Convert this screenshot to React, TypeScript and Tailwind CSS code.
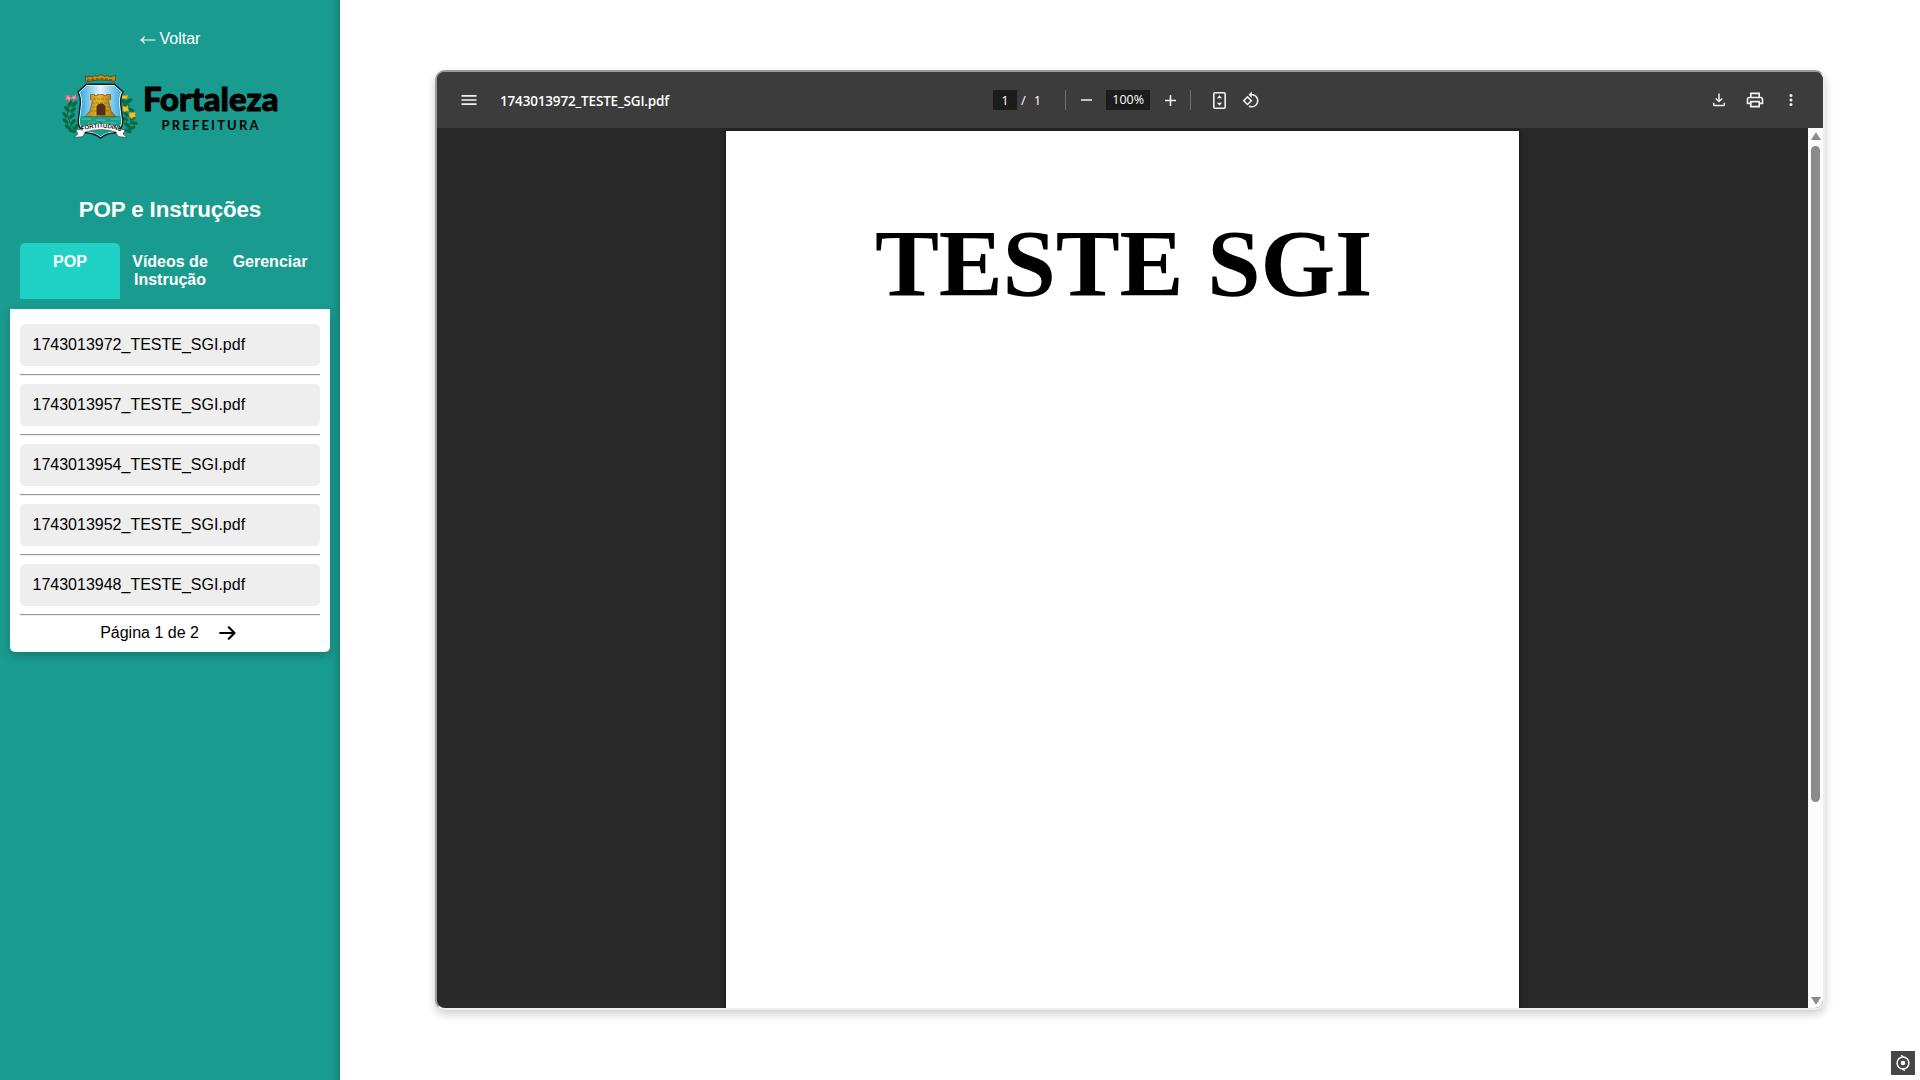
import React from "react";

const files = [
  "1743013972_TESTE_SGI.pdf",
  "1743013957_TESTE_SGI.pdf",
  "1743013954_TESTE_SGI.pdf",
  "1743013952_TESTE_SGI.pdf",
  "1743013948_TESTE_SGI.pdf",
];

function Leaf({ x, y, r, c = "#12663f" }: { x: number; y: number; r: number; c?: string }) {
  return <ellipse cx={x} cy={y} rx="3.6" ry="1.7" fill={c} stroke="#0b7a50" strokeWidth=".4" transform={`rotate(${r} ${x} ${y})`} />;
}

function Logo() {
  return (
    <svg width="222" height="72" viewBox="60 71 222 72" className="block shrink-0 overflow-visible">
      <defs>
        <linearGradient id="sky" x1="0" x2="1">
          <stop offset="0" stopColor="#2ba3e0" />
          <stop offset=".5" stopColor="#e4f5fd" />
          <stop offset="1" stopColor="#35a6e0" />
        </linearGradient>
        <linearGradient id="gold" x1="0" x2="1">
          <stop offset="0" stopColor="#b9810e" />
          <stop offset=".45" stopColor="#e6b830" />
          <stop offset="1" stopColor="#a06c0c" />
        </linearGradient>
        <clipPath id="shield">
          <path d="M88 84H115L123 91Q120 97 121 104L123 120Q123 128 116 131Q106 132 101.500 136.500Q97 132 87 131Q80 128 80 120L82 104Q83 97 80 91Z" />
        </clipPath>
      </defs>
      <path d="M72 99Q63 115 77 131" fill="none" stroke="#0c5c3a" strokeWidth="1" />
      <Leaf x={71} y={103} r={-65} /><Leaf x={75.5} y={103} r={-45} />
      <Leaf x={68} y={108} r={50} /><Leaf x={74} y={109} r={-45} />
      <Leaf x={66} y={114} r={50} /><Leaf x={73} y={115} r={-45} />
      <Leaf x={66.500} y={120} r={45} /><Leaf x={74} y={121} r={-50} />
      <Leaf x={69} y={126} r={35} /><Leaf x={77} y={126} r={-60} />
      <Leaf x={73} y={130} r={20} />
      <path d="M125 97Q137 112 129 130" fill="none" stroke="#0c5c3a" strokeWidth="1" />
      <Leaf x={125} y={101} r={40} /><Leaf x={130} y={100} r={-35} />
      <Leaf x={126} y={106} r={70} /><Leaf x={132} y={109} r={20} />
      <Leaf x={127} y={113} r={45} /><Leaf x={134} y={117} r={-35} />
      <Leaf x={126} y={118} r={25} /><Leaf x={135} y={122} r={10} />
      <Leaf x={128} y={124} r={50} /><Leaf x={133} y={127} r={-25} />
      <Leaf x={129} y={130} r={20} />
      <path d="M66 94l3 1 1-2 1 3 2 1-2 1v3l-2-2-3 0 1-2zM73 94l2 1 2-2 0 3 2 1-3 1-1 2-1-2-3 0 2-2z" fill="#ee6a9c" />
      <path d="M68.500 96l2 2M74 97l2-1" stroke="#f8cf3b" strokeWidth="1.300" />
      <g fill="#f6c22a" stroke="#d79a13" strokeWidth=".5">
        <path d="M123 94l3 1 3-1-1 3-2 1-3-1z" />
        <path d="M124 105l3 1 2-1 0 3 1 2-3 0-2 1-1-2z" />
        <path d="M131 111l2 1 3-1 0 3 1 2-3 0-1 2-2-2-1-2z" />
      </g>
      <path d="M86 75.500l3 1 1-1.500 4 1 1-1.500 4 1 1-1.500h4l1 1.500 4-1 1 1.500 4-1 3-.5-1 6Q101 77 87 81Z" fill="#c68e12" stroke="#3e2c08" strokeWidth=".6" />
      <path d="M88 79.300q13-3 27 0" fill="none" stroke="#5e3c08" strokeWidth="1" strokeDasharray="3 1.500" />
      <path d="M88 84H115L123 91Q120 97 121 104L123 120Q123 128 116 131Q106 132 101.500 136.500Q97 132 87 131Q80 128 80 120L82 104Q83 97 80 91Z" fill="url(#sky)" />
      <g clipPath="url(#shield)">
        <path d="M78 115H125V138H78Z" fill="#16a08e" />
        <path d="M83 118h9M97 119h10M112 118h9M89 122h8M103 122h14" stroke="#4cc4b5" strokeWidth="1" />
      </g>
      <path d="M86.500 115.500l3-4h1l3-12-2-1v-5h4v1h3v-1h6v1h3v-1h4v5l-2 1 3 12h1l3 4Z" fill="url(#gold)" stroke="#6e4808" strokeWidth=".6" />
      <path d="M94 98h16M93 102h17M92.500 106h19M91 110h20" stroke="#9a690c" strokeWidth=".7" strokeDasharray="3 1" />
      <path d="M97.500 114.500v-7q0-5 4.500-5t4.500 5v7Z" fill="#52301a" />
      <path d="M88 84H115L123 91Q120 97 121 104L123 120Q123 128 116 131Q106 132 101.500 136.500Q97 132 87 131Q80 128 80 120L82 104Q83 97 80 91Z" fill="none" stroke="#e9f8f8" strokeWidth="1.600" />
      <path d="M87.500 83.300H115.500L124 91Q120.800 97 121.800 104L123.800 120Q123.800 128 116 131.800Q106 132.500 101.500 137.300Q97 132.500 87 131.800Q79.200 128 79.200 120L81.200 104Q82.200 97 79 91Z" fill="none" stroke="#081c22" strokeWidth="1.400" />
      <path d="M75 136.500l4-3.500-2-4 6-1v-3Q101 119 120 125v3l6 1-2 4 4 3.500-9-1-2-4.500Q102 126 86 131l-2 4.500Z" fill="#fff" stroke="#1c2b2b" strokeWidth=".5" />
      <path id="ribbon" d="M82.500 129.800Q101.500 123.500 120.500 129.800" fill="none" />
      <text fontFamily="Liberation Sans" fontWeight="700" fontSize="6" fill="#111"><textPath href="#ribbon">FORTITUDINE</textPath></text>
      <text x="144" y="110" fontFamily="Lato" fontWeight="900" fontSize="33" stroke="#000" strokeWidth="1" textLength="135.500" lengthAdjust="spacingAndGlyphs" fill="#000">Fortaleza</text>
      <text x="162.500" y="129" fontFamily="Lato" fontWeight="700" fontSize="13" textLength="97" fill="#000">PREFEITURA</text>
    </svg>
  );
}

function MIcon({ d, size = 20 }: { d: string; size?: number }) {
  return (
    <svg width={size} height={size} viewBox="0 0 24 24" fill="#f1f1f1" className="block shrink-0">
      <path d={d} />
    </svg>
  );
}

function Sidebar() {
  return (
    <aside className="flex h-full w-[340px] shrink-0 flex-col items-center bg-[#1a9b90] px-2.5 pt-[30px] shadow-[inset_-10px_0_10px_-8px_rgba(0,0,0,0.22)]">
      <a className="flex h-[18px] items-center text-base leading-[18px] text-white">
        <svg width="16" height="10" viewBox="0 0 16 10" className="mr-1 mt-0.5" fill="none" stroke="#fff" strokeWidth="1.200">
          <path d="M.8 5H15.500M4.500 1.500Q3.500 4 .8 5Q3.500 6 4.500 8.500" />
        </svg>
        Voltar
      </a>
      <div className="mt-6 w-[222px]"><Logo /></div>
      <h1 className="mt-[53px] text-[22.4px] font-bold leading-[26px] tracking-[-0.17px] text-white">POP e Instruções</h1>
      <nav className="mt-5 grid w-[300px] grid-cols-3 text-center text-base font-bold leading-[18px] text-white">
        <button className="flex h-14 justify-center rounded-t-[5px] bg-[#20d2c5] pt-2.5">POP</button>
        <button className="h-14">Vídeos de Instrução</button>
        <button className="flex h-14 justify-center pt-2.5">Gerenciar</button>
      </nav>
      <section className="mt-2.5 w-80 rounded-b-[5px] bg-white px-2.5 pt-[15px] shadow-[0_4px_8px_rgba(0,0,0,0.2)]">
        {files.map((f) => (
          <div key={f} className="h-[60px]">
            <div className="h-[42px] rounded-[5px] bg-[#eeeeee] pl-[12.500px] pt-3 text-base leading-[18px] text-black">{f}</div>
            <div className="mt-2 h-0.5 border-b border-t border-b-[#eeeeee] border-t-[#9a9a9a]" />
          </div>
        ))}
        <div className="flex h-7 items-start justify-center pr-1 text-base leading-[18px] text-black">
          <span className="mr-5">Página 1 de 2</span>
          <svg width="17" height="16" viewBox="0 0 17 16" className="mt-px" fill="none" stroke="#000" strokeWidth="2.200" strokeLinecap="round" strokeLinejoin="round">
            <path d="M1.200 8H15.500M9.800 2.300L15.500 8L9.800 13.700" />
          </svg>
        </div>
      </section>
    </aside>
  );
}

function Toolbar() {
  return (
    <header className="grid h-14 shrink-0 grid-cols-[543px_1fr_auto] items-center bg-[#3c3c3c] font-['Open_Sans',sans-serif] text-[13px] text-white">
      <div className="flex items-center pl-[22px]">
        <MIcon d="M3 18h18v-2H3v2zm0-5h18v-2H3v2zm0-7v2h18V6H3z" />
        <span className="ml-[21px] pt-0.5 text-[13.500px] font-semibold tracking-[-0.170px]">1743013972_TESTE_SGI.pdf</span>
      </div>
      <div className="flex items-center pl-[13px]">
        <span className="flex h-5 w-6 items-center justify-center bg-[#1c1c1c] pt-px">1</span>
        <span className="ml-1 pt-px">/</span>
        <span className="ml-2 pt-px">1</span>
        <span className="ml-6 h-5 w-px bg-[#6d6d6d]" />
        <span className="ml-[13px] flex w-[14px] justify-center"><span className="h-0.5 w-[11px] bg-[#c5c5c5]" /></span>
        <span className="ml-[13px] flex h-5 w-11 items-center justify-center bg-[#1c1c1c] pt-px text-[12.500px]">100%</span>
        <svg width="11" height="11" viewBox="0 0 11 11" className="ml-[15px]" stroke="#f1f1f1" strokeWidth="1.600"><path d="M5.500 0v11M0 5.500h11" /></svg>
        <span className="ml-[14px] h-5 w-px bg-[#6d6d6d]" />
        <svg width="13" height="17" viewBox="0 0 13 17" className="ml-[22px]" fill="none" stroke="#f1f1f1">
          <rect x=".8" y=".8" width="11.400" height="15.400" rx="1.200" strokeWidth="1.600" />
          <path d="M4 6.200L6.500 3.200L9 6.200ZM4 10.800L6.500 13.800L9 10.800Z" fill="#f1f1f1" stroke="none" />
        </svg>
        <span className="ml-4">
          <MIcon d="M7.340 6.410L.86 12.900l6.490 6.480 6.490-6.480-6.500-6.490zM3.690 12.900l3.660-3.660L11 12.900l-3.660 3.660-3.650-3.660zm15.670-6.260C17.610 4.880 15.300 4 13 4V.76L8.760 5 13 9.240V6c1.790 0 3.580.68 4.950 2.050 2.730 2.730 2.730 7.170 0 9.900C16.580 19.320 14.790 20 13 20c-.97 0-1.940-.21-2.840-.61l-1.490 1.490C10.020 21.620 11.510 22 13 22c2.300 0 4.610-.88 6.360-2.640 3.520-3.510 3.520-9.210 0-12.720z" size={18} />
        </span>
      </div>
      <div className="flex items-center gap-4 pr-[22px]">
        <svg width="20" height="20" viewBox="0 0 20 20" fill="none" stroke="#f1f1f1" strokeWidth="1.500">
          <path d="M10 3.500v8M6.700 8.500L10 11.500l3.300-3M4.700 12.800v2q0 .8.8.8h9q.8 0 .8-.8v-2" />
        </svg>
        <MIcon size={20} d="M19 8h-1V3H6v5H5c-1.660 0-3 1.340-3 3v6h4v4h12v-4h4v-6c0-1.660-1.340-3-3-3zM8 5h8v3H8V5zm8 12v2H8v-4h8v2zm2-2v-2H6v2H4v-4c0-.55.45-1 1-1h14c.55 0 1 .45 1 1v4h-2z" />
        <svg width="20" height="20" viewBox="0 0 20 20" fill="#f1f1f1"><circle cx="10" cy="5.500" r="1.500" /><circle cx="10" cy="10" r="1.500" /><circle cx="10" cy="14.500" r="1.500" /></svg>
      </div>
    </header>
  );
}

export default function App() {
  return (
    <div className="relative flex h-[1080px] w-[1920px] overflow-hidden bg-white font-['Liberation_Sans',Arial,sans-serif]">
      <Sidebar />
      <main className="flex-1 pl-[95px] pt-[70px]">
        <div className="flex h-[940px] w-[1390px] flex-col overflow-hidden rounded-[10px] border-2 border-b-[#eeeeee] border-l-[#9a9a9a] border-r-[#eeeeee] border-t-[#9a9a9a] bg-[#282828] shadow-[0_4px_10px_rgba(0,0,0,0.2)]">
          <Toolbar />
          <div className="flex min-h-0 flex-1">
            <div className="flex-1 overflow-hidden pl-[289px] pt-[3px]">
              <article className="h-[1123px] w-[793px] bg-white pl-0.5 pt-[78px] text-center font-['Liberation_Serif',serif] text-[96px] font-bold leading-[110px] tracking-[-0.200px] text-black shadow-[0_0_4px_rgba(0,0,0,0.6)]">
                TESTE SGI
              </article>
            </div>
            <div className="flex w-[15px] flex-col items-center bg-[#fcfcfc] pt-[5px]">
              <svg width="10" height="7" viewBox="0 0 10 7"><path d="M5 0L9.500 7H.5Z" fill="#8b8b8b" stroke="#8b8b8b" strokeLinejoin="round" /></svg>
              <div className="mt-1.5 h-[656px] w-[9px] rounded-full bg-[#8b8b8b]" />
              <svg width="10" height="7" viewBox="0 0 10 7" className="mb-1 mt-auto"><path d="M5 7L.5 0H9.500Z" fill="#8b8b8b" stroke="#8b8b8b" strokeLinejoin="round" /></svg>
            </div>
          </div>
        </div>
      </main>
      <div className="absolute bottom-[5px] right-[5px] flex h-6 w-6 items-center justify-center bg-[#464646]">
        <svg width="16" height="18" viewBox="0 0 16 18" fill="none" stroke="#fff" strokeWidth="1.500">
          <circle cx="8" cy="9" r="5.900" />
          <path d="M6.200 1.300L8.300 3.100M9.800 16.700L7.700 14.900" />
          <circle cx="8" cy="9" r="2.300" fill="#fff" stroke="none" />
        </svg>
      </div>
    </div>
  );
}
